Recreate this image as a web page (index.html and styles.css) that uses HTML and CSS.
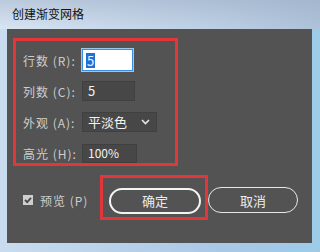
FILE: index.html
```html
<!DOCTYPE html>
<html lang="zh-CN">
<head>
    <meta charset="UTF-8">
    <title>创建渐变网格</title>
    <link rel="stylesheet" href="styles.css">
</head>
<body>
    <div class="window">
        <div class="titlebar">创建渐变网格</div>
        <div class="panel">
            <div class="fields mark">
                <div class="row">
                    <span class="label">行数 (R):</span>
                    <span class="field field-focus"><span class="sel">5</span></span>
                </div>
                <div class="row">
                    <span class="label">列数 (C):</span>
                    <span class="field field-wide">5</span>
                </div>
                <div class="row">
                    <span class="label">外观 (A):</span>
                    <span class="field field-select">平淡色
                        <svg class="chevron" width="9" height="6" viewBox="0 0 9 6"><polyline points="1,1 4.5,4.5 8,1" fill="none" stroke="#e6e6e6" stroke-width="1.6"/></svg>
                    </span>
                </div>
                <div class="row">
                    <span class="label">高光 (H):</span>
                    <span class="field field-pct">100%</span>
                </div>
            </div>
            <div class="footer">
                <label class="preview"><span class="check">
                    <svg width="10" height="10" viewBox="0 0 10 10"><polyline points="2,5 4.2,7.2 8,2.8" fill="none" stroke="#4a4a4a" stroke-width="1.8"/></svg>
                </span>预览 (P)</label>
                <div class="mark ok-wrap">
                    <button class="btn btn-ok">确定</button>
                </div>
                <button class="btn btn-cancel">取消</button>
            </div>
        </div>
    </div>
</body>
</html>
```

FILE: styles.css
```css
body {
    margin: 0;
    font-family: "Noto Sans CJK SC", "Noto Sans", sans-serif;
    background: #a9cbe8;
}
.window {
    width: 320px;
    height: 252px;
    background: linear-gradient(to right, #c9dcef, #a9c8e6 70%, #9ccbe8);
    overflow: hidden;
}
.titlebar {
    height: 29px;
    box-sizing: border-box;
    padding: 6px 0 0 12px;
    font-size: 12px;
    line-height: 16px;
    color: #111;
    background: linear-gradient(to bottom, rgba(160,178,202,0.55), rgba(200,220,240,0.2)),
                linear-gradient(to right, #dce7f3, #b8cbe0 70%, #a7bbd3);
}
.panel {
    margin: 0 8px 0 7px;
    height: 214px;
    box-sizing: border-box;
    background: #535353;
    padding: 9px 0 0 6px;
}
.mark {
    border: 3px solid #e3363b;
}
.fields {
    width: 165px;
    height: 128px;
    box-sizing: border-box;
    padding: 9px 0 0 7px;
    display: flex;
    flex-direction: column;
    gap: 11px;
}
.row {
    display: flex;
    align-items: center;
    height: 20px;
}
.label {
    width: 59px;
    font-size: 12px;
    letter-spacing: 1px;
    color: #cdcdcd;
    white-space: nowrap;
}
.field {
    height: 20px;
    box-sizing: border-box;
    background: #474747;
    border: 1px solid #404040;
    color: #f2f2f2;
    font-size: 13px;
    line-height: 18px;
    padding-left: 5px;
    display: flex;
    align-items: center;
}
.field-focus {
    width: 51px;
    height: 22px;
    background: #fff;
    border: 1px solid #3b8ee0;
    box-shadow: 0 0 0 1px #9cc8f0;
    padding-left: 3px;
}
.sel {
    background: #1f6fd8;
    color: #e8f2ff;
    padding: 0 1px;
    line-height: 15px;
}
.field-wide {
    width: 53px;
}
.field-select {
    width: 75px;
    justify-content: space-between;
    padding-right: 6px;
    font-size: 13px;
}
.chevron {
    display: block;
}
.field-pct {
    width: 55px;
    height: 19px;
    font-size: 12px;
}
.footer {
    display: flex;
    align-items: flex-start;
    margin-top: 9px;
    padding-left: 10px;
}
.preview {
    width: 77px;
    height: 26px;
    margin-top: 12px;
    display: flex;
    align-items: center;
    gap: 7px;
    font-size: 12px;
    letter-spacing: 1px;
    color: #cdcdcd;
}
.check {
    width: 10px;
    height: 10px;
    background: #cfcfcf;
    display: block;
}
.check svg {
    display: block;
}
.ok-wrap {
    width: 108px;
    height: 45px;
    box-sizing: border-box;
    padding: 9px 0 0 6px;
}
.btn {
    height: 26px;
    border-radius: 13px;
    background: transparent;
    color: #ececec;
    font-family: inherit;
    font-size: 13px;
    padding: 0;
    box-sizing: border-box;
}
.btn-ok {
    width: 92px;
    border: 2px solid #f4f4f4;
}
.btn-cancel {
    width: 90px;
    margin-top: 12px;
    border: 1px solid #e8e8e8;
}
```
